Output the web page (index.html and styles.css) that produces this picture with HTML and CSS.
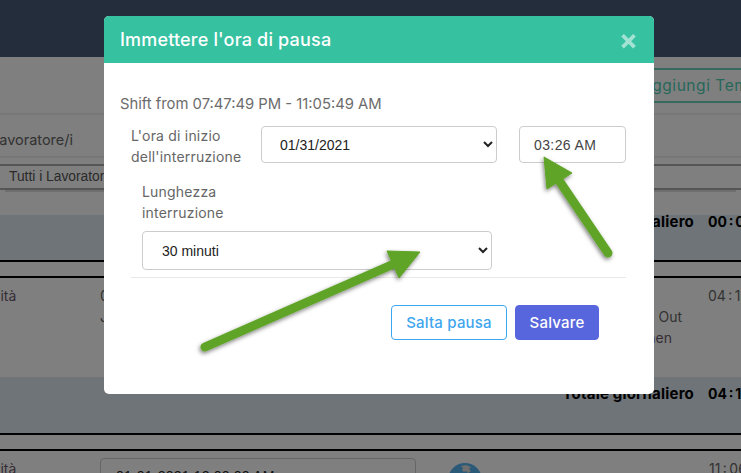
FILE: index.html
```html
<!DOCTYPE html>
<html lang="it">
<head>
<meta charset="utf-8">
<title>Immettere l'ora di pausa</title>
<link rel="stylesheet" href="styles.css">
</head>
<body>
<div class="page">
  <header class="topbar"></header>
  <div class="actions"><span class="add-btn">Aggiungi Tempo</span></div>
  <div class="filter-head"><span class="clip-l">Lavoratore/i</span></div>
  <div class="filter-row"><span class="filter-value">Tutti i Lavoratori</span></div>
  <div class="band"><span class="total-label">Totale giornaliero</span><span class="total-value">00 : 00</span></div>
  <div class="spacer"></div>
  <div class="entry entry-a">
    <span class="clip-a">Attività</span>
    <div class="entry-mid"><span>01</span><span>J</span></div>
    <div class="entry-notes"><span>Clock Out</span><span class="note-b">Kitchen</span></div>
    <span class="time">04 : 18</span>
  </div>
  <div class="band band-b"><span class="total-label">Totale giornaliero</span><span class="total-value">04 : 18</span></div>
  <div class="spacer"></div>
  <div class="entry entry-b">
    <span class="clip-a">Attività</span>
    <div class="date-box">01-01-2021 12:00:00 AM</div>
    <svg class="globe" viewBox="0 0 34 34" aria-hidden="true"><circle cx="17" cy="17" r="17" fill="#56b4f0"/><path d="M13 3l5-1 5 2-2 2 2 2-3 2-2-2-2 1-2-2 1-2z" fill="#ddd"/></svg>
    <span class="time time-b">11 : 06</span>
  </div>
</div>

<div class="backdrop"></div>

<section class="modal">
  <div class="modal-head">
    <h2>Immettere l'ora di pausa</h2>
    <span class="close">×</span>
  </div>
  <div class="modal-body">
    <p class="shift">Shift from 07:47:49 PM - 11:05:49 AM</p>
    <div class="start-row">
      <label class="lbl lbl-start">L'ora di inizio dell'interruzione</label>
      <select class="ctl sel-date"><option>01/31/2021</option></select>
      <input class="ctl time-input" type="text" value="03:26 AM">
    </div>
    <div class="length-block">
      <label class="lbl lbl-length">Lunghezza interruzione</label>
      <select class="ctl sel-length"><option>30 minuti</option></select>
    </div>
    <hr class="rule">
    <div class="buttons">
      <button class="btn btn-outline" type="button">Salta pausa</button>
      <button class="btn btn-solid" type="button">Salvare</button>
    </div>
  </div>
</section>

<svg class="arrows" viewBox="0 0 741 473" aria-hidden="true">
  <defs>
    <filter id="sh" x="-20%" y="-20%" width="140%" height="140%">
      <feDropShadow dx="-1" dy="2" stdDeviation="2" flood-color="#000" flood-opacity=".5"/>
    </filter>
  </defs>
  <g filter="url(#sh)" fill="#5fa428" stroke="#5fa428">
    <path d="M608 253 L556 176" stroke-width="9" stroke-linecap="round" fill="none"/>
    <path d="M544 157 L572 173 L547 189 Z" stroke-width="1"/>
    <path d="M205 347 L396 263" stroke-width="9" stroke-linecap="round" fill="none"/>
    <path d="M420 252 L387 251 L399 278 Z" stroke-width="1"/>
  </g>
</svg>
</body>
</html>
```
FILE: styles.css
```css
* { box-sizing: border-box; }
html, body { margin: 0; height: 100%; }
body {
  width: 741px;
  height: 473px;
  overflow: hidden;
  position: relative;
  background: #fff;
  font-family: Inter, "Noto Sans", sans-serif;
  color: #333;
}
.page { display: flex; flex-direction: column; width: 741px; height: 473px; overflow: hidden; }
.topbar { height: 57px; background: #465a76; flex: none; }
.actions {
  height: 58px; flex: none; border-bottom: 2px solid #eee;
  display: flex; justify-content: flex-end; padding-top: 11px;
}
.add-btn {
  height: 35px; width: 150px; margin-right: -50px; padding: 6px 0 0 0;
  border: solid #6fd3bc; border-width: 2px 0; color: #4fd0b5; font-size: 15.5px; letter-spacing: .55px; white-space: nowrap; overflow: hidden;
}
.filter-head { height: 43px; flex: none; border-bottom: 2px solid #eee; padding-top: 16px; overflow: hidden; font-size: 14.5px; color: #666; }
.clip-l { display: block; margin-left: -9px; white-space: nowrap; }
.filter-row {
  height: 26px; margin-top: 6px; flex: none; border: solid #aaa; border-width: 2px 0;
  box-shadow: 0 7px 0 -5px #ddd; font: 13.8px "Liberation Sans", sans-serif; color: #555; padding: 3px 0 0 9px; white-space: nowrap;
}
.band {
  height: 47px; margin-top: 25px; flex: none; background: #dee8f0; border-bottom: 2px solid #000;
  display: flex; justify-content: flex-end; font-weight: 700; font-size: 15px; color: #000;
}
.band-b { height: 58px; margin-top: 0; padding-top: 10px; }
.total-label, .total-value { white-space: nowrap; line-height: 14px; }
.total-label { letter-spacing: .2px; }
.total-value { width: 33px; margin-left: 14px; overflow: hidden; font-size: 14px; word-spacing: -1.5px; }
.spacer { height: 16px; flex: none; border-bottom: 2px solid #000; }
.entry { flex: none; display: flex; font-size: 14px; color: #666; position: relative; }
.entry-a { height: 99px; }
.entry-b { height: 22px; }
.clip-a { margin-left: -29px; width: 129px; padding-top: 9px; flex: none; color: #6e5a6e; }
.entry-mid { display: flex; flex-direction: column; gap: 4px; padding-top: 9px; width: 470px; flex: none; }
.entry-notes { display: flex; flex-direction: column; align-items: flex-end; gap: 4px; width: 112px; padding-top: 30px; line-height: 17px; flex: none; white-space: nowrap; }
.note-b { margin-right: 10px; color: #6e5a6e; }
.time { white-space: nowrap; margin: 9px 0 0 26px; word-spacing: -1.5px; }
.date-box {
  width: 316px; height: 40px; margin-top: 7px; flex: none; padding: 9px 15px;
  border: 1px solid #ccc; border-radius: 4px; color: #222; font: 14px "Liberation Sans", sans-serif; letter-spacing: .2px;
}
.globe { width: 34px; height: 34px; margin: 12px 0 0 32px; flex: none; }
.time-b { margin: 9px 0 0 227px; }

.backdrop { position: absolute; inset: 0; background: rgba(0, 0, 0, .5); }

.modal {
  position: absolute; left: 104px; top: 16px; width: 550px; height: 378px;
  background: #fff; border-radius: 5px; overflow: hidden;
}
.modal-head {
  height: 47px; background: #36c1a1; display: flex; align-items: center;
  justify-content: space-between; padding: 0 16px;
}
.modal-head h2 { margin: 0; font-size: 18px; font-weight: 500; letter-spacing: .18px; color: #fff; }
.close { font-size: 28px; font-weight: 700; line-height: 1; color: #fff; opacity: .55; }
.modal-body { padding: 32px 28px 0 16px; }
.shift { margin: 0; font-size: 14.8px; line-height: 18px; color: #6c6c6c; }
.start-row { display: flex; align-items: flex-start; margin-top: 13px; padding-left: 11px; }
.lbl { font-size: 14px; line-height: 21px; letter-spacing: .2px; color: #666; }
.lbl-start { width: 130px; flex: none; margin-top: -1px; }
.ctl {
  height: 37px; border: 1px solid #ccc; border-radius: 4px; background: #fff;
  font: 14px "Liberation Sans", sans-serif; color: #222;
}
.sel-date { width: 236px; padding-left: 14px; }
.time-input { width: 107px; margin-left: 22px; padding-left: 14px; color: #444; letter-spacing: .4px; }
.length-block { padding: 14px 0 0 22px; }
.lbl-length { display: block; width: 120px; }
.sel-length { display: block; width: 350px; height: 39px; margin-top: 8px; padding-left: 15px; }
.rule { margin: 7px 0 0 11px; border: 0; border-top: 1px solid #e8e8e8; }
.buttons { display: flex; justify-content: flex-end; gap: 8px; margin: 27px 27px 0 0; }
.btn { height: 35px; border-radius: 4px; font: 500 15px Inter, sans-serif; letter-spacing: .2px; }
.btn-outline { width: 116px; background: #fff; border: 1px solid #3ea6ef; color: #3ea6ef; }
.btn-solid { width: 84px; background: #5866dd; border: 1px solid #5866dd; color: #fff; }

.arrows { position: absolute; left: 0; top: 0; width: 741px; height: 473px; pointer-events: none; }
```
